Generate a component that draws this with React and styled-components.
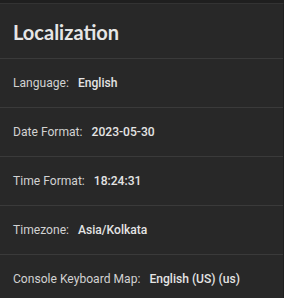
import React from 'react';
import styled, { createGlobalStyle } from 'styled-components';

const GlobalStyle = createGlobalStyle`
  html, body {
    margin: 0;
    padding: 0;
    background: #1f1f1f;
  }
  body {
    font-family: Roboto, "Liberation Sans", sans-serif;
  }
`;

const Page = styled.div`
  padding-top: 3px;
  width: 284px;
  height: 298px;
  overflow: hidden;
  box-sizing: border-box;
`;

const Card = styled.section`
  background: #282828;
  border-top: 1px solid #333333;
  border-right: 1px solid #1f1f1f;
  min-height: 100%;
`;

const Header = styled.div`
  height: 55px;
  display: flex;
  align-items: center;
  padding: 1px 13px 0;
  box-sizing: border-box;
  border-bottom: 1px solid #3a3a3a;
`;

const Title = styled.h2`
  margin: 0;
  font-family: Lato, "Open Sans", sans-serif;
  font-weight: 700;
  font-size: 20px;
  color: #e6e6e6;
`;

const Row = styled.div`
  height: 48px;
  display: flex;
  align-items: center;
  gap: 9px;
  padding: 0 13px;
  font-size: 12.1px;
  border-bottom: 1px solid #3a3a3a;
`;

const Label = styled.span`
  color: #d2d2d2;
`;

const Value = styled.span`
  color: #e4e4e4;
  font-weight: 500;
`;

const items = [
  { label: 'Language:', value: 'English' },
  { label: 'Date Format:', value: '2023-05-30' },
  { label: 'Time Format:', value: '18:24:31' },
  { label: 'Timezone:', value: 'Asia/Kolkata' },
  { label: 'Console Keyboard Map:', value: 'English (US) (us)' },
];

export default function App() {
  return (
    <>
      <GlobalStyle />
      <Page>
        <Card>
          <Header>
            <Title>Localization</Title>
          </Header>
          {items.map((item) => (
            <Row key={item.label}>
              <Label>{item.label}</Label>
              <Value>{item.value}</Value>
            </Row>
          ))}
        </Card>
      </Page>
    </>
  );
}
